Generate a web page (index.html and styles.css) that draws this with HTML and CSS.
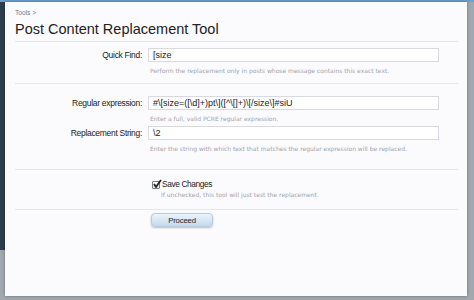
FILE: index.html
```html
<!DOCTYPE html>
<html lang="en">
<head>
    <meta charset="UTF-8">
    <title>Post Content Replacement Tool</title>
    <link rel="stylesheet" href="styles.css">
</head>
<body>
    <div class="panel">
        <div class="crumbs"><a href="#">Tools</a> &gt;</div>
        <h1>Post Content Replacement Tool</h1>

        <form class="xform">
            <div class="unit unit-first">
                <label class="ctrl-label" for="quick">Quick Find:</label>
                <div class="ctrl">
                    <input type="text" id="quick" value="[size">
                    <p class="explain">Perform the replacement only in posts whose message contains this exact text.</p>
                </div>
            </div>

            <div class="unit sep unit-regex">
                <label class="ctrl-label" for="regex">Regular expression:</label>
                <div class="ctrl">
                    <input type="text" id="regex" value="#\[size=([\d]+)pt\]([^\[]+)\[/size\]#siU">
                    <p class="explain">Enter a full, valid PCRE regular expression.</p>
                </div>
            </div>

            <div class="unit unit-repl">
                <label class="ctrl-label" for="repl">Replacement String:</label>
                <div class="ctrl">
                    <input type="text" id="repl" value="\2">
                    <p class="explain">Enter the string with which text that matches the regular expression will be replaced.</p>
                </div>
            </div>

            <div class="unit sep unit-check">
                <div class="ctrl-label"></div>
                <div class="ctrl">
                    <label class="check">
                        <span class="box">
                            <svg width="10" height="10" viewBox="0 0 10 10"><path d="M2 5 L4 8 L9 1" fill="none" stroke="#222" stroke-width="1.8"/></svg>
                        </span>
                        Save Changes
                    </label>
                    <p class="explain indent">If unchecked, this tool will just test the replacement.</p>
                </div>
            </div>

            <div class="unit sep submit">
                <div class="ctrl-label"></div>
                <div class="ctrl">
                    <button type="submit" class="button">Proceed</button>
                </div>
            </div>
        </form>
    </div>
</body>
</html>
```

FILE: styles.css
```css
html, body {
    height: 100%;
}

body {
    margin: 0;
    box-sizing: border-box;
    padding: 2px 7px 4px 5px;
    font-family: "Liberation Sans", Arial, sans-serif;
    color: #222;
    background:
        linear-gradient(#6d9fcf, #6d9fcf) 0 0 / 100% 2px no-repeat,
        linear-gradient(#2e3d4c, #2e3d4c) 0 0 / 6px 250px no-repeat,
        #a2a9ae;
}

.panel {
    height: 100%;
    box-sizing: border-box;
    background: #fbfbfe;
    padding: 6px 9px 0 10px;
    box-shadow: 0 0 3px rgba(0, 0, 0, 0.35);
}

.crumbs {
    font-size: 6.6px;
    color: #6b7f95;
    line-height: 10px;
}

.crumbs a {
    color: #5b7fa5;
    text-decoration: none;
}

h1 {
    margin: 2px 0 0;
    font-size: 14.5px;
    font-weight: normal;
    color: #222;
    line-height: 18px;
    padding-bottom: 3px;
    border-bottom: 1px solid #e4e6ea;
}

.xform {
    margin: 0;
}

.unit {
    display: grid;
    grid-template-columns: 127px 1fr;
    column-gap: 6px;
}

.unit.sep {
    border-top: 1px solid #e4e6ea;
}

.unit-first {
    padding-top: 6px;
}

.unit-regex {
    margin-top: 8px;
    padding-top: 12px;
}

.unit-repl {
    padding-top: 3px;
}

.unit-check {
    margin-top: 16px;
    padding-top: 9px;
}

.submit {
    margin-top: 10px;
    padding-top: 3px;
}

.ctrl-label {
    text-align: right;
    font-size: 8.5px;
    letter-spacing: -0.3px;
    line-height: 14px;
    color: #222;
}

.ctrl {
    padding-right: 18px;
}

.ctrl input[type="text"] {
    display: block;
    box-sizing: border-box;
    width: 291px;
    height: 14px;
    margin: 0;
    padding: 0 4px;
    border: 1px solid #d8dadf;
    background: #fff;
    font-family: inherit;
    font-size: 9px;
    color: #222;
    outline: none;
}

.explain {
    margin: 4px 0 0 2px;
    font-family: "DejaVu Sans", sans-serif;
    font-size: 6px;
    line-height: 9px;
    color: #a0a3a8;
}

.explain.indent {
    margin-top: 0;
    margin-left: 13px;
}

.check {
    display: flex;
    align-items: center;
    gap: 2px;
    margin-left: 4px;
    font-size: 8.4px;
    letter-spacing: -0.4px;
    line-height: 11px;
    color: #222;
}

.box {
    position: relative;
    width: 8px;
    height: 8px;
    box-sizing: border-box;
    border: 1px solid #7a7d82;
    border-radius: 1px;
    background: linear-gradient(#fff, #e2e4e8);
}

.box svg {
    position: absolute;
    left: -1px;
    top: -3px;
}

.button {
    display: block;
    margin-left: 3px;
    width: 62px;
    height: 14px;
    padding: 0;
    border: 1px solid #b4cbe0;
    border-radius: 4px;
    background: linear-gradient(#eef4fa, #c3d9ee);
    box-shadow: 0 1px 2px rgba(0, 0, 0, 0.25);
    font-family: inherit;
    font-size: 7.8px;
    letter-spacing: -0.2px;
    color: #222;
}
```
